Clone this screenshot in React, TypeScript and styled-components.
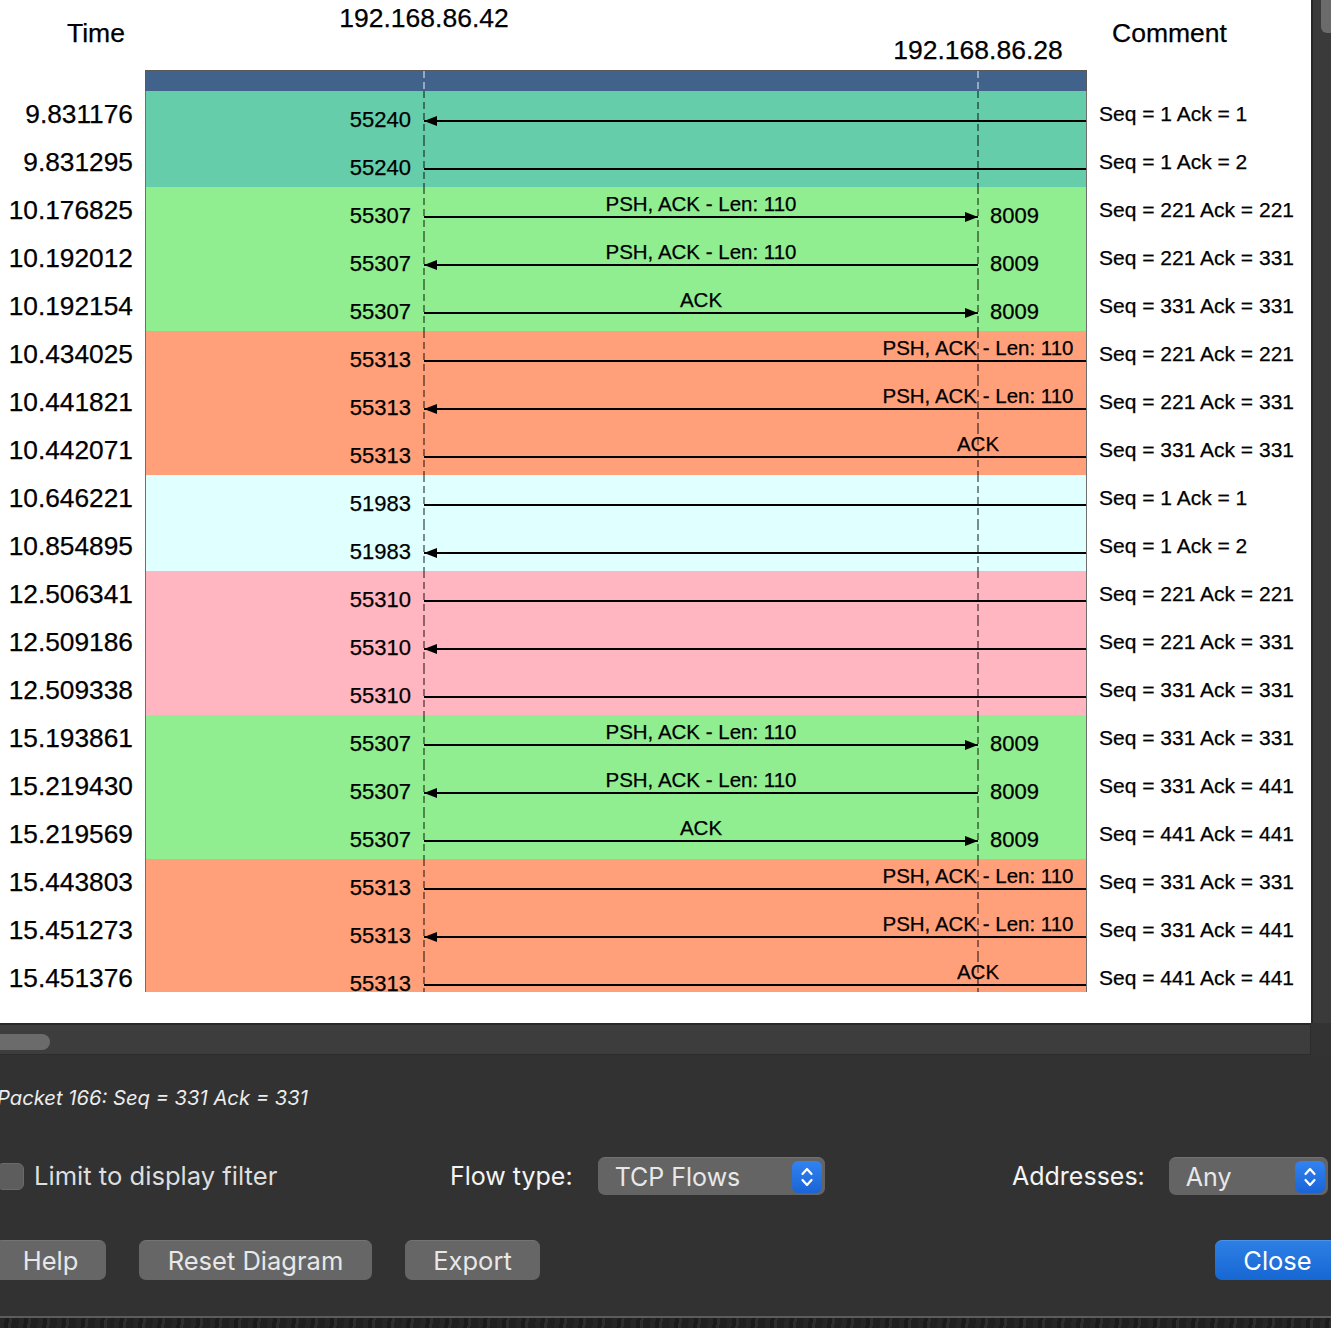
import React from "react";
import styled, { createGlobalStyle } from "styled-components";

const GlobalStyle = createGlobalStyle`
  html, body {
    margin: 0;
    padding: 0;
    background: #323232;
  }
  body {
    width: 1331px;
    height: 1328px;
    overflow: hidden;
  }
`;

// lifeline geometry inside the chart column
const FIRST = 278;
const SPACING = 554;

const GROUP_COLORS = ["#66cdaa", "#90ee90", "#ffa07a", "#e0ffff", "#ffb6c1", "#90ee90", "#ffa07a"];

type Dir = "left" | "right";

type Packet = {
	time: string;
	port: string;
	group: number;
	to: number;
	dir: Dir;
	label?: string;
	dest?: string;
	comment: string;
};

const PSH = "PSH, ACK - Len: 110";

const packets: Packet[] = [
	{ time: "9.831176", port: "55240", group: 0, to: 3, dir: "left", comment: "Seq = 1 Ack = 1" },
	{ time: "9.831295", port: "55240", group: 0, to: 3, dir: "right", comment: "Seq = 1 Ack = 2" },
	{ time: "10.176825", port: "55307", group: 1, to: 1, dir: "right", label: PSH, dest: "8009", comment: "Seq = 221 Ack = 221" },
	{ time: "10.192012", port: "55307", group: 1, to: 1, dir: "left", label: PSH, dest: "8009", comment: "Seq = 221 Ack = 331" },
	{ time: "10.192154", port: "55307", group: 1, to: 1, dir: "right", label: "ACK", dest: "8009", comment: "Seq = 331 Ack = 331" },
	{ time: "10.434025", port: "55313", group: 2, to: 2, dir: "right", label: PSH, comment: "Seq = 221 Ack = 221" },
	{ time: "10.441821", port: "55313", group: 2, to: 2, dir: "left", label: PSH, comment: "Seq = 221 Ack = 331" },
	{ time: "10.442071", port: "55313", group: 2, to: 2, dir: "right", label: "ACK", comment: "Seq = 331 Ack = 331" },
	{ time: "10.646221", port: "51983", group: 3, to: 3, dir: "right", comment: "Seq = 1 Ack = 1" },
	{ time: "10.854895", port: "51983", group: 3, to: 3, dir: "left", comment: "Seq = 1 Ack = 2" },
	{ time: "12.506341", port: "55310", group: 4, to: 3, dir: "right", comment: "Seq = 221 Ack = 221" },
	{ time: "12.509186", port: "55310", group: 4, to: 3, dir: "left", comment: "Seq = 221 Ack = 331" },
	{ time: "12.509338", port: "55310", group: 4, to: 3, dir: "right", comment: "Seq = 331 Ack = 331" },
	{ time: "15.193861", port: "55307", group: 5, to: 1, dir: "right", label: PSH, dest: "8009", comment: "Seq = 331 Ack = 331" },
	{ time: "15.219430", port: "55307", group: 5, to: 1, dir: "left", label: PSH, dest: "8009", comment: "Seq = 331 Ack = 441" },
	{ time: "15.219569", port: "55307", group: 5, to: 1, dir: "right", label: "ACK", dest: "8009", comment: "Seq = 441 Ack = 441" },
	{ time: "15.443803", port: "55313", group: 6, to: 2, dir: "right", label: PSH, comment: "Seq = 331 Ack = 331" },
	{ time: "15.451273", port: "55313", group: 6, to: 2, dir: "left", label: PSH, comment: "Seq = 331 Ack = 441" },
	{ time: "15.451376", port: "55313", group: 6, to: 2, dir: "right", label: "ACK", comment: "Seq = 441 Ack = 441" },
];

const hosts = ["192.168.86.42", "192.168.86.28"];

const lifelines = (color: string) => {
	const dash = `repeating-linear-gradient(to bottom, ${color} 0 7px, transparent 7px 11px)`;
	return `
	background-image: ${dash}, ${dash};
	background-size: 2px 100%;
	background-position: ${FIRST - 1}px 0, ${FIRST + SPACING - 1}px 0;
	background-repeat: no-repeat;
	`;
};

const Window = styled.div`
	width: 1331px;
	height: 1328px;
	display: flex;
	flex-direction: column;
	overflow: hidden;
	background: #323232;
`;

const ViewArea = styled.div`
	display: flex;
	height: 1023px;
`;

const Scene = styled.div`
	width: 1311px;
	height: 100%;
	background: #ffffff;
	font-family: "Liberation Sans", Arial, sans-serif;
	color: #000;
	-webkit-text-stroke: 0.25px #000;
	overflow: hidden;
`;

const VScroll = styled.div`
	flex: 1;
	background: #3a3a3a;
	border-left: 2px solid #272727;
	display: flex;
	justify-content: flex-end;
	align-items: flex-start;
`;

const VThumb = styled.div`
	width: 10px;
	height: 33px;
	background: #6b6b6b;
	border-bottom-left-radius: 6px;
`;

const SceneRow = styled.div<{ $h: number }>`
	display: grid;
	grid-template-columns: 145px 942px 1fr;
	height: ${p => p.$h}px;
`;

const TimeHead = styled.div`
	padding: 18px 0 0 67px;
	font-size: 26.5px;
	line-height: 30px;
`;

const CommentHead = styled.div`
	padding: 18px 0 0 25px;
	font-size: 26.5px;
	line-height: 30px;
`;

const HostArea = styled.div`
	position: relative;
`;

const HostLabel = styled.div<{ $x: number; $y: number }>`
	position: absolute;
	left: ${p => p.$x}px;
	top: ${p => p.$y}px;
	transform: translateX(-50%);
	font-size: 26.5px;
	line-height: 30px;
	white-space: nowrap;
`;

const ChartHeader = styled.div`
	box-sizing: border-box;
	border: 1px solid #5a5a5a;
	border-bottom: none;
	background-color: #41628a;
	${lifelines("rgba(255, 255, 255, 0.45)")}
`;

const Body = styled.div`
	height: 901px;
	overflow: hidden;
`;

const TimeCell = styled.div`
	text-align: right;
	padding: 9px 12px 0 0;
	font-size: 26.3px;
	line-height: 28px;
	white-space: nowrap;
`;

const CommentCell = styled.div`
	padding: 11px 0 0 12px;
	font-size: 21px;
	line-height: 24px;
	white-space: nowrap;
`;

const ChartRow = styled.div<{ $bg: string }>`
	box-sizing: border-box;
	display: grid;
	grid-template-columns: ${FIRST}px repeat(3, ${SPACING}px);
	overflow: hidden;
	border-left: 1px solid #6e6e6e;
	border-right: 1px solid #6e6e6e;
	background-color: ${p => p.$bg};
	${lifelines("rgba(0, 0, 0, 0.45)")}
`;

const Port = styled.div<{ $col: number; $side: "left" | "right" }>`
	grid-row: 1;
	grid-column: ${p => p.$col};
	padding-top: 17px;
	font-size: 22px;
	line-height: 24px;
	text-align: ${p => p.$side};
	${p => (p.$side === "right" ? "padding-right: 13px;" : "padding-left: 12px;")}
	white-space: nowrap;
`;

const Message = styled.div<{ $from: number; $to: number }>`
	grid-row: 1;
	grid-column: ${p => p.$from + 2} / ${p => p.$to + 2};
	padding-top: 6px;
`;

const MessageLabel = styled.div`
	height: 22px;
	font-size: 20.5px;
	line-height: 22px;
	text-align: center;
	white-space: nowrap;
`;

const MessageLine = styled.div<{ $dir: Dir }>`
	position: relative;
	height: 2px;
	margin-top: 1px;
	background: #000;
	&::after {
		content: "";
		position: absolute;
		top: -4px;
		width: 13px;
		height: 10px;
		background: #000;
		${p =>
			p.$dir === "left"
				? "left: 0; clip-path: polygon(0 50%, 100% 0, 100% 100%);"
				: "right: 0; clip-path: polygon(100% 50%, 0 0, 0 100%);"}
	}
`;

const HScrollRow = styled.div`
	display: flex;
	height: 32px;
`;

const HTrack = styled.div`
	box-sizing: border-box;
	width: 1311px;
	background: #3d3d3d;
	border-top: 2px solid #282828;
	border-bottom: 1px solid #2c2c2c;
	border-right: 1px solid #2c2c2c;
	padding-top: 9px;
`;

const HThumb = styled.div`
	width: 58px;
	height: 16px;
	margin-left: -8px;
	border-radius: 8px;
	background: #6b6b6b;
`;

const Corner = styled.div`
	flex: 1;
	background: #333;
`;

const Panel = styled.div`
	height: 261px;
	display: flex;
	flex-direction: column;
	font-family: "Inter", "Liberation Sans", sans-serif;
	color: #e6e6e6;
`;

const PacketInfo = styled.div`
	margin: 31px 0 0 -3px;
	font-size: 20.2px;
	line-height: 24px;
	font-style: italic;
	color: #ececec;
	white-space: nowrap;
`;

const Controls = styled.div`
	display: grid;
	grid-template-columns: 453px 562px auto;
	align-items: center;
	height: 40px;
	margin: 46px 0 0 -3px;
`;

const Field = styled.div<{ $gap: number }>`
	display: flex;
	align-items: center;
	gap: ${p => p.$gap}px;
`;

const CheckBox = styled.div`
	box-sizing: border-box;
	width: 27px;
	height: 27px;
	border-radius: 6px;
	background: #5d5d5d;
	border: 1px solid #6a6a6a;
`;

const FieldLabel = styled.span<{ $bright?: boolean; $size?: number }>`
	font-size: ${p => p.$size ?? 25}px;
	line-height: 30px;
	color: ${p => (p.$bright ? "#f4f4f4" : "#dedede")};
	white-space: nowrap;
`;

const Select = styled.div<{ $w: number }>`
	box-sizing: border-box;
	width: ${p => p.$w}px;
	height: 38px;
	display: flex;
	align-items: center;
	justify-content: space-between;
	padding: 0 3px 0 17px;
	border-radius: 7px;
	background: #646464;
	border-top: 1px solid #717171;
	font-size: 25px;
	color: #e8e8e8;
`;

const Stepper = styled.div`
	width: 30px;
	height: 32px;
	border-radius: 6px;
	background: linear-gradient(#3283f2, #1a64d6);
	display: flex;
	align-items: center;
	justify-content: center;
`;

const Buttons = styled.div`
	display: flex;
	gap: 33px;
	width: 1345px;
	margin: 44px 0 0 -5px;
`;

const Button = styled.div<{ $w: number; $primary?: boolean }>`
	box-sizing: border-box;
	width: ${p => p.$w}px;
	height: 40px;
	border-radius: 7px;
	display: flex;
	align-items: center;
	justify-content: center;
	font-size: 25.5px;
	color: ${p => (p.$primary ? "#ffffff" : "#e8e8e8")};
	background: ${p => (p.$primary ? "linear-gradient(#2d7fe4, #1767d4)" : "#666666")};
	border-top: 1px solid ${p => (p.$primary ? "#4a93ec" : "#737373")};
	${p => (p.$primary ? "margin-left: auto;" : "")}
`;

const Desktop = styled.div`
	flex: 1;
	border-top: 2px solid #5c5c5c;
	background: repeating-linear-gradient(97deg, #262626 0 5px, #1b1b1b 5px 9px, #2e2e2e 9px 12px, #202020 12px 19px);
`;

function StepperIcon() {
	return (
		<svg width="16" height="26" viewBox="0 0 16 26" fill="none" stroke="#fff" strokeWidth="2.2" strokeLinecap="round" strokeLinejoin="round">
			<path d="M3.5 10 L8 5 L12.5 10" />
			<path d="M3.5 16 L8 21 L12.5 16" />
		</svg>
	);
}

function PacketRow({ p }: { p: Packet }) {
	return (
		<SceneRow $h={48}>
			<TimeCell>{p.time}</TimeCell>
			<ChartRow $bg={GROUP_COLORS[p.group]}>
				<Port $col={1} $side="right">{p.port}</Port>
				<Message $from={0} $to={p.to}>
					<MessageLabel>{p.label ?? ""}</MessageLabel>
					<MessageLine $dir={p.dir} />
				</Message>
				{p.dest && (
					<Port $col={p.to + 2} $side="left">{p.dest}</Port>
				)}
			</ChartRow>
			<CommentCell>{p.comment}</CommentCell>
		</SceneRow>
	);
}

export default function App() {
	return (
		<>
			<GlobalStyle />
			<Window>
				<ViewArea>
					<Scene>
						<SceneRow $h={70}>
							<TimeHead>Time</TimeHead>
							<HostArea>
								{hosts.map((h, i) => (
									<HostLabel key={h} $x={1 + FIRST + i * SPACING} $y={i % 2 === 0 ? 3 : 35}>
										{h}
									</HostLabel>
								))}
							</HostArea>
							<CommentHead>Comment</CommentHead>
						</SceneRow>
						<SceneRow $h={21}>
							<div />
							<ChartHeader />
							<div />
						</SceneRow>
						<Body>
							{packets.map((p, i) => (
								<PacketRow key={i} p={p} />
							))}
						</Body>
					</Scene>
					<VScroll>
						<VThumb />
					</VScroll>
				</ViewArea>
				<HScrollRow>
					<HTrack>
						<HThumb />
					</HTrack>
					<Corner />
				</HScrollRow>
				<Panel>
					<PacketInfo>Packet 166: Seq = 331 Ack = 331</PacketInfo>
					<Controls>
						<Field $gap={10}>
							<CheckBox />
							<FieldLabel $size={25.6}>Limit to display filter</FieldLabel>
						</Field>
						<Field $gap={25}>
							<FieldLabel $bright>Flow type:</FieldLabel>
							<Select $w={227}>
								TCP Flows
								<Stepper>
									<StepperIcon />
								</Stepper>
							</Select>
						</Field>
						<Field $gap={24}>
							<FieldLabel $bright>Addresses:</FieldLabel>
							<Select $w={159}>
								Any
								<Stepper>
									<StepperIcon />
								</Stepper>
							</Select>
						</Field>
					</Controls>
					<Buttons>
						<Button $w={111}>Help</Button>
						<Button $w={233}>Reset Diagram</Button>
						<Button $w={135}>Export</Button>
						<Button $w={125} $primary>
							Close
						</Button>
					</Buttons>
				</Panel>
				<Desktop />
			</Window>
		</>
	);
}
